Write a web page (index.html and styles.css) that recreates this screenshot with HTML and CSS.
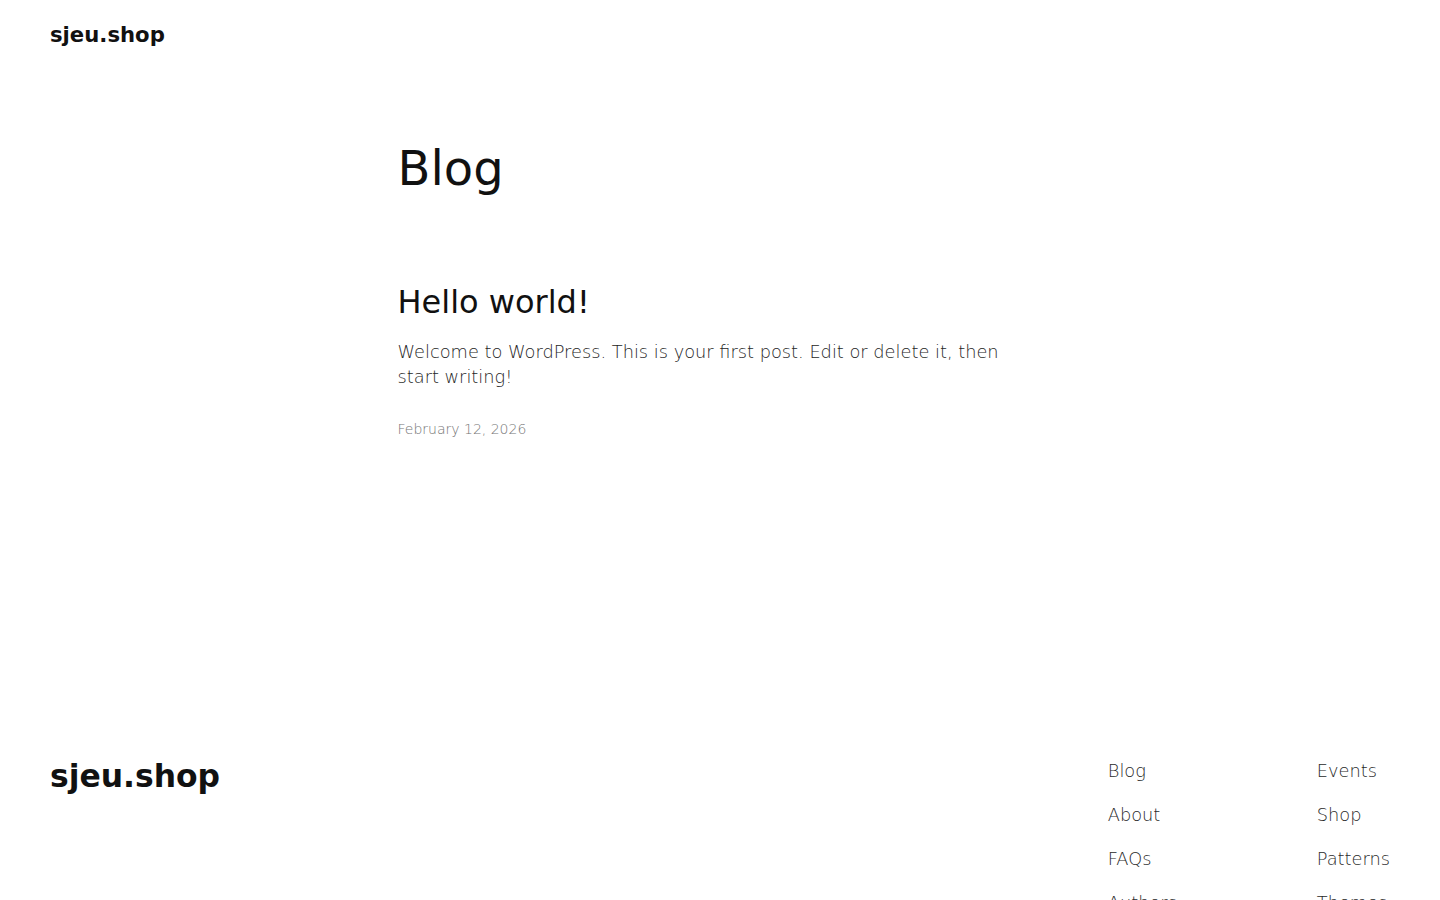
FILE: index.html
```html
<!DOCTYPE html>
<html lang="en">
<head>
<meta charset="utf-8">
<title>Blog – sjeu.shop</title>
<link rel="stylesheet" href="styles.css">
</head>
<body>
<header class="site-header">
  <a class="site-title" href="#">sjeu.shop</a>
</header>
<main class="site-main">
  <h1 class="page-title">Blog</h1>
  <article class="post">
    <h2 class="post-title"><a href="#">Hello world!</a></h2>
    <p class="post-excerpt">Welcome to WordPress. This is your first post. Edit or delete it, then start writing!</p>
    <div class="post-date">February 12, 2026</div>
  </article>
</main>
<footer class="site-footer">
  <a class="footer-title" href="#">sjeu.shop</a>
  <nav class="footer-nav">
    <ul class="footer-col footer-col-first">
      <li><a href="#">Blog</a></li>
      <li><a href="#">About</a></li>
      <li><a href="#">FAQs</a></li>
      <li><a href="#">Authors</a></li>
    </ul>
    <ul class="footer-col">
      <li><a href="#">Events</a></li>
      <li><a href="#">Shop</a></li>
      <li><a href="#">Patterns</a></li>
      <li><a href="#">Themes</a></li>
    </ul>
  </nav>
</footer>
</body>
</html>
```
FILE: styles.css
```css
* { box-sizing: border-box; }
html, body { margin: 0; padding: 0; }
body {
  font-family: "DejaVu Sans", sans-serif;
  color: #111;
  background: #fff;
}
a { color: inherit; text-decoration: none; }

.site-header {
  display: flex;
  align-items: center;
  padding: 0 50px;
  height: 69px;
}
.site-title {
  font-size: 21.2px;
  font-weight: 700;
  color: #111;
}

.site-main {
  width: 645px;
  margin: 0 auto;
  padding-top: 71px;
}
.page-title {
  font-size: 48px;
  font-weight: 400;
  line-height: 1.2;
  margin: 0 0 85px;
  color: #111;
}
.post-title {
  font-size: 32px;
  font-weight: 400;
  line-height: 1.2;
  margin: 0 0 18px;
  color: #111;
}
.post-excerpt {
  font-size: 17.8px;
  font-weight: 300;
  line-height: 25px;
  color: #262626;
  margin: 0 0 30px;
}
.post-date {
  font-size: 14px;
  font-weight: 300;
  color: #767676;
  line-height: 20px;
}

.site-footer {
  display: flex;
  justify-content: space-between;
  align-items: flex-start;
  padding: 0 50px;
  margin-top: 319px;
}
.footer-title {
  font-size: 31.4px;
  font-weight: 700;
  line-height: 1.2;
  color: #111;
}
.footer-nav {
  display: flex;
}
.footer-col {
  list-style: none;
  margin: 0;
  padding: 0;
  display: flex;
  flex-direction: column;
  gap: 18px;
}
.footer-col-first {
  width: 209px;
}
.footer-col li {
  font-size: 17.8px;
  font-weight: 300;
  line-height: 26px;
  color: #2a2a2a;
  white-space: nowrap;
}
```
